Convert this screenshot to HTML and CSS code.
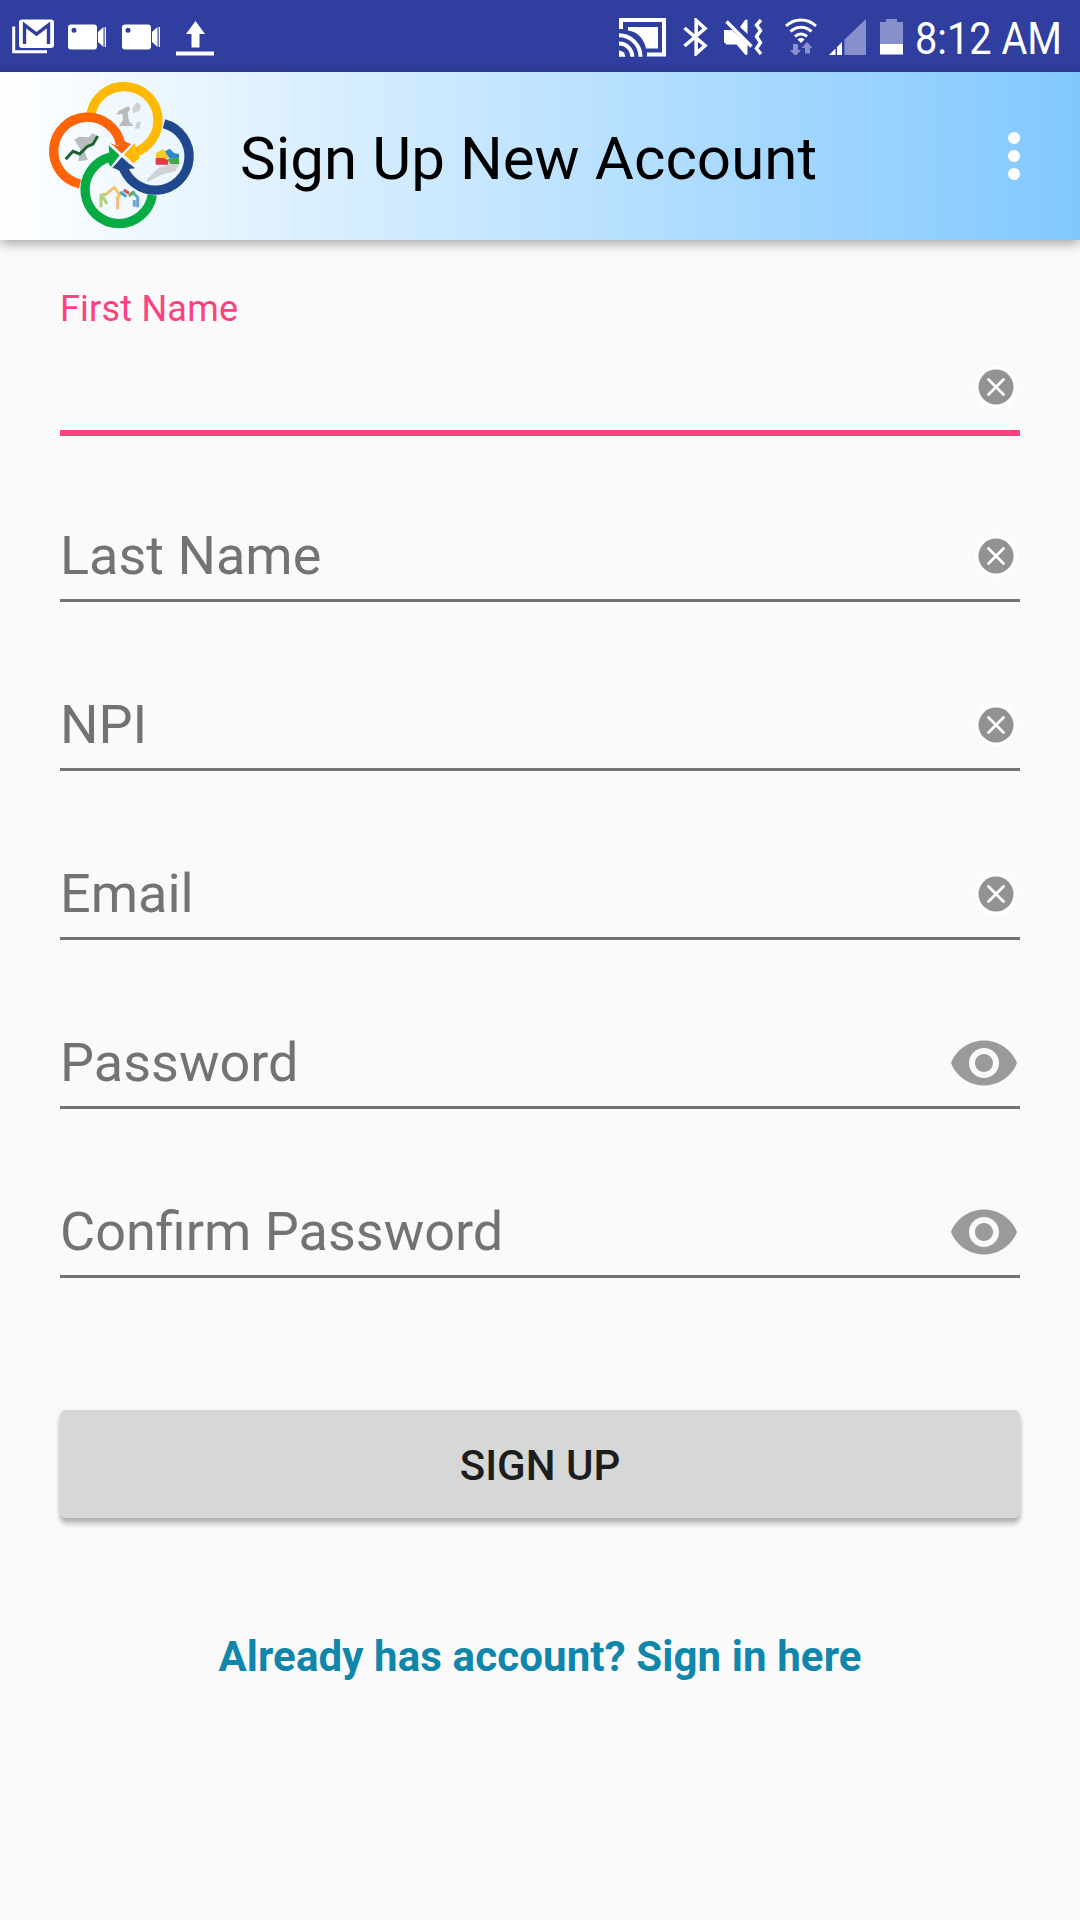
FILE: index.html
```html
<!DOCTYPE html>
<html lang="en">
<head>
<meta charset="utf-8">
<title>Sign Up New Account</title>
<link rel="stylesheet" href="styles.css">
</head>
<body>
<svg class="defs" width="0" height="0" aria-hidden="true">
  <symbol id="clear" viewBox="0 0 48 48">
    <circle cx="24" cy="24" r="21" fill="#fff"/>
    <circle cx="24" cy="24" r="17.5" fill="#929292"/>
    <path d="M16.500 16.500l15 15M31.500 16.500l-15 15" stroke="#fff" stroke-width="2.800" stroke-linecap="round"/>
  </symbol>
  <symbol id="eye" viewBox="0 0 24 24">
    <path fill="#9a9a9a" d="M12 4.500C7 4.500 2.730 7.610 1 12c1.730 4.390 6 7.500 11 7.500s9.270-3.110 11-7.500c-1.730-4.390-6-7.500-11-7.500zM12 17c-2.760 0-5-2.240-5-5s2.240-5 5-5 5 2.240 5 5-2.240 5-5 5zm0-8c-1.660 0-3 1.340-3 3s1.340 3 3 3 3-1.340 3-3-1.340-3-3-3z"/>
  </symbol>
  <symbol id="camera" viewBox="0 0 40 26">
    <path fill="#fff" fill-rule="evenodd" d="M3 .500h23a3 3 0 0 1 3 3v19a3 3 0 0 1-3 3H3a3 3 0 0 1-3-3v-19a3 3 0 0 1 3-3zM6 3.700a2.500 2.500 0 1 0 0 5 2.500 2.500 0 0 0 0-5z"/>
    <path fill="#fff" d="M30 8l5.500-5v20L30 18z"/>
    <path stroke="#fff" stroke-width="1.300" d="M37.300 3v20"/>
  </symbol>
</svg>

<div class="status-bar">
  <div class="notifications">
    <svg width="42" height="36" viewBox="0 0 42 36">
      <path d="M1.700 7.500v25.300H35" fill="none" stroke="#fff" stroke-width="3"/>
      <rect x="7" y="0.500" width="35" height="28.500" rx="3" fill="#fff"/>
      <path d="M12.500 25V6l12 9 12-9v19" fill="none" stroke="#303f9f" stroke-width="3.400"/>
    </svg>
    <svg class="cam" width="40" height="26"><use href="#camera"/></svg>
    <svg class="cam" width="40" height="26"><use href="#camera"/></svg>
    <svg class="upload" width="38" height="36" viewBox="0 0 38 36" fill="#fff">
      <path d="M19.500 1l9.500 13h-5.500v13.500h-8V14H10z"/>
      <path d="M0 31.500h38v4H0z"/>
    </svg>
  </div>
  <div class="system">
    <svg class="cast" width="47" height="39" viewBox="0 0 47 39" fill="none" stroke="#fff" stroke-width="4">
      <path d="M2 11V2h43v34.500H28"/>
      <path d="M9 9h30v21.500H27C25 21 19 14 9 12.500z" fill="#fff" stroke="none"/>
      <path d="M0 17.300a21.500 21.500 0 0 1 21.500 21.500M0 25.500a13.300 13.300 0 0 1 13.300 13.300"/>
      <path d="M0 32.500a6.300 6.300 0 0 1 6.300 6.300H0z" fill="#fff" stroke="none"/>
    </svg>
    <svg class="bluetooth" width="25" height="38" viewBox="0 0 25 38">
      <path d="M1.500 10L22 27.500 13.200 35.500V2.500L22 10.500 1.500 28" fill="none" stroke="#fff" stroke-width="3.600"/>
    </svg>
    <svg class="mute" width="39" height="37" viewBox="0 0 39 37">
      <path fill="#fff" d="M0 12h8l15.500 14v10.500l-2 .500-9-10.500H2.500L0 24z"/>
      <path fill="#fff" d="M16 9l5-7 2.500-.500V16z"/>
      <path d="M2.500 3.500L27.500 28.500" stroke="#fff" stroke-width="3.400"/>
      <path d="M37 2l-4.500 5 4 5.500-4 6 4 6-4 6L37 36" fill="none" stroke="#fff" stroke-width="3.400"/>
    </svg>
    <svg class="wifi" width="32" height="37" viewBox="0 0 32 37">
      <g fill="none" stroke="#fff" stroke-width="3">
        <path d="M1 8a21.500 21.500 0 0 1 30 0"/>
        <path d="M5.500 13.500a15 15 0 0 1 21 0"/>
        <path d="M10 18.500a8.500 8.500 0 0 1 12 0"/>
      </g>
      <path fill="#fff" d="M12.500 21.500a5 5 0 0 1 7 0L16 25z"/>
      <path fill="#8b92cb" d="M8 26h5v6h3.200l-5.700 6-5.700-6H8zM20 35.500V30h-3.500l5.700-6 5.300 6H25v5.500z"/>
    </svg>
    <svg class="signal" width="37" height="36" viewBox="0 0 37 36">
      <path fill="#8790ca" d="M37 0v36H15.500V20.500z"/>
      <path fill="#fff" d="M0 36l6.500-6.500V36zM8 28l5-5v13H8z"/>
    </svg>
    <svg class="battery" width="23" height="36" viewBox="0 0 23 36">
      <path fill="#8790ca" d="M6 0h11v3h6v22H0V3h6z"/>
      <path fill="#fff" d="M0 25h23v10.500H0z"/>
    </svg>
    <div class="clock">8:12 AM</div>
  </div>
</div>

<header class="toolbar">
  <svg class="logo" viewBox="0 0 465 465">
    <g fill="#cfd2d4">
      <path d="M222 92l28-14 6 8-8 12 4 26 14 14h-44l12-18-2-18-18 2z" fill="#b8babc"/>
      <path d="M262 84l14-18 12 10-4 16-20 8z"/>
      <path d="M274 128l14-6-4 22-14 4z"/>
      <path d="M88 180l14-10 30 2 10-12 12 6-22 34-14 12 10 28-28 4 6-36z" fill="#b9bdbf"/>
      <path d="M306 298l34-34 68-20-16 28-46 14-38 20z"/>
    </g>
    <path d="M62 238l22-24 20 8 22-22 18-8 14-24" fill="none" stroke="#1d6330" stroke-width="9"/>
    <path d="M332 220l22-12 16 14v14h-36z" fill="#f3cb25"/>
    <path d="M332 234h24l14 6v14h-38z" fill="#e33942"/>
    <path d="M360 214l14-8 14 14 14 2v14h-28z" fill="#2f86cd"/>
    <path d="M368 238l34-6v20h-26z" fill="#46a84c"/>
    <g fill="none" stroke-width="9">
      <path d="M168 382v-36l16-4M174 350l12 22" stroke="#b5cf80"/>
      <path d="M182 344l26-22 16 22-10 14" stroke="#f3c46c"/>
      <path d="M218 388v-34" stroke="#f6bb82"/>
      <path d="M226 336l18 14" stroke="#4c9fc2"/>
      <path d="M236 330l16 10" stroke="#e64b55"/>
      <path d="M252 348l16-14" stroke="#58ad5b"/>
      <path d="M266 340l12 12v30M268 360v20" stroke="#6aa6cf"/>
    </g>
    <g fill="none" stroke-width="28">
      <path d="M138 101A101.500 101.500 0 1 1 264 219" stroke="#ffb900"/>
      <path d="M357 131A101.500 101.500 0 1 1 232 252" stroke="#21478d"/>
      <path d="M105 312A101.500 101.500 0 1 1 227 193" stroke="#ff6308"/>
      <path d="M322 345A101.500 101.500 0 1 1 196 231" stroke="#07aa43"/>
    </g>
    <path d="M235 222l36-33v22l14 22-20 17z" fill="#ffb900"/>
    <path d="M230 231l40 34-24 3-10 12-24-14-10-2z" fill="#21478d"/>
    <path d="M196 190l22 8 20-14 20 8-28 29z" fill="#ff6308"/>
    <path d="M191 196l33 30-27 34-14-23 10-12z" fill="#07aa43"/>
    <path d="M203 197l53 55M202 258l59-63" stroke="#edf7ff" stroke-width="4"/>
  </svg>
  <h1>Sign Up New Account</h1>
  <svg class="overflow" width="12" height="48" viewBox="0 0 12 48" fill="#fff">
    <circle cx="6" cy="6" r="6"/><circle cx="6" cy="24" r="6"/><circle cx="6" cy="42" r="6"/>
  </svg>
</header>

<main class="form">
  <div class="field focused">
    <label class="label">First Name</label>
    <div class="row"><span></span><svg class="clear"><use href="#clear"/></svg></div>
  </div>
  <div class="field">
    <div class="row"><span>Last Name</span><svg class="clear"><use href="#clear"/></svg></div>
  </div>
  <div class="field">
    <div class="row"><span>NPI</span><svg class="clear"><use href="#clear"/></svg></div>
  </div>
  <div class="field">
    <div class="row"><span>Email</span><svg class="clear"><use href="#clear"/></svg></div>
  </div>
  <div class="field">
    <div class="row"><span>Password</span><svg class="eye"><use href="#eye"/></svg></div>
  </div>
  <div class="field">
    <div class="row"><span>Confirm Password</span><svg class="eye"><use href="#eye"/></svg></div>
  </div>
  <button class="submit" type="button">SIGN UP</button>
  <a class="signin">Already has account? Sign in here</a>
</main>
</body>
</html>
```
FILE: styles.css
```css
* { box-sizing: border-box; }
body {
  margin: 0;
  min-height: 1920px;
  background: #fafafa;
  font-family: Roboto, "Liberation Sans", sans-serif;
  overflow: hidden;
}
svg { display: block; flex: none; }
.defs { position: absolute; }

.status-bar {
  height: 72px;
  display: flex;
  justify-content: space-between;
  background: #303f9f;
}
.notifications, .system { display: flex; align-items: flex-start; }
.notifications { padding: 19px 0 0 12px; }
.cam { margin: 5px 0 0 14px; }
.notifications svg + .upload { margin: 1px 0 0 14px; }
.system { padding: 18px 18px 0 0; }
.bluetooth { margin-left: 17px; }
.mute { margin-left: 16px; }
.wifi { margin-left: 22px; }
.signal { margin: 1px 0 0 12px; }
.battery { margin: 1px 0 0 14px; }
.clock {
  width: 147px;
  margin: 1px 0 0 12px;
  height: 40px;
  line-height: 40px;
  font-size: 45px;
  color: #fff;
  white-space: nowrap;
  transform: scaleX(.882);
  transform-origin: left center;
}

.toolbar {
  height: 168px;
  display: flex;
  align-items: center;
  padding: 0 60px 0 45px;
  background: linear-gradient(to right, #fff, #81c8ff);
  box-shadow: 0 3px 12px rgba(0, 0, 0, .38);
}
.logo { width: 155px; height: 155px; margin-top: 3px; }
.toolbar h1 {
  flex: 1;
  margin: 6px 0 0 40px;
  font-size: 60px;
  line-height: 72px;
  font-weight: 400;
  letter-spacing: .06px;
  color: #000;
}

.form {
  display: flex;
  flex-direction: column;
  padding: 0 60px;
}
.field {
  height: 169px;
  display: flex;
  flex-direction: column;
  justify-content: flex-end;
  padding-bottom: 11px;
  border-bottom: 3px solid #737373;
}
.field.focused {
  height: 196px;
  justify-content: space-between;
  padding-top: 48px;
  border-bottom: 6px solid #ff4081;
}
.focused + .field { height: 166px; }
.label {
  font-size: 36px;
  line-height: 42px;
  letter-spacing: .22px;
  color: #ff4081;
}
.row {
  height: 64px;
  display: flex;
  align-items: center;
  justify-content: space-between;
  font-size: 54px;
  line-height: 64px;
  color: #737373;
}
.clear { width: 48px; height: 48px; }
.eye { width: 72px; height: 72px; }

.submit {
  height: 108px;
  margin-top: 132px;
  padding: 4px 0 0;
  border: 0;
  border-radius: 6px;
  background: #d6d7d7;
  box-shadow: 0 6px 5px rgba(0, 0, 0, .24), 0 1px 4px rgba(0, 0, 0, .12);
  font: 500 42px/50px Roboto, "Liberation Sans", sans-serif;
  color: #1d1d1d;
}
.signin {
  margin-top: 114px;
  text-align: center;
  font-size: 42px;
  line-height: 50px;
  font-weight: 700;
  letter-spacing: .12px;
  color: #0f86aa;
}
```
